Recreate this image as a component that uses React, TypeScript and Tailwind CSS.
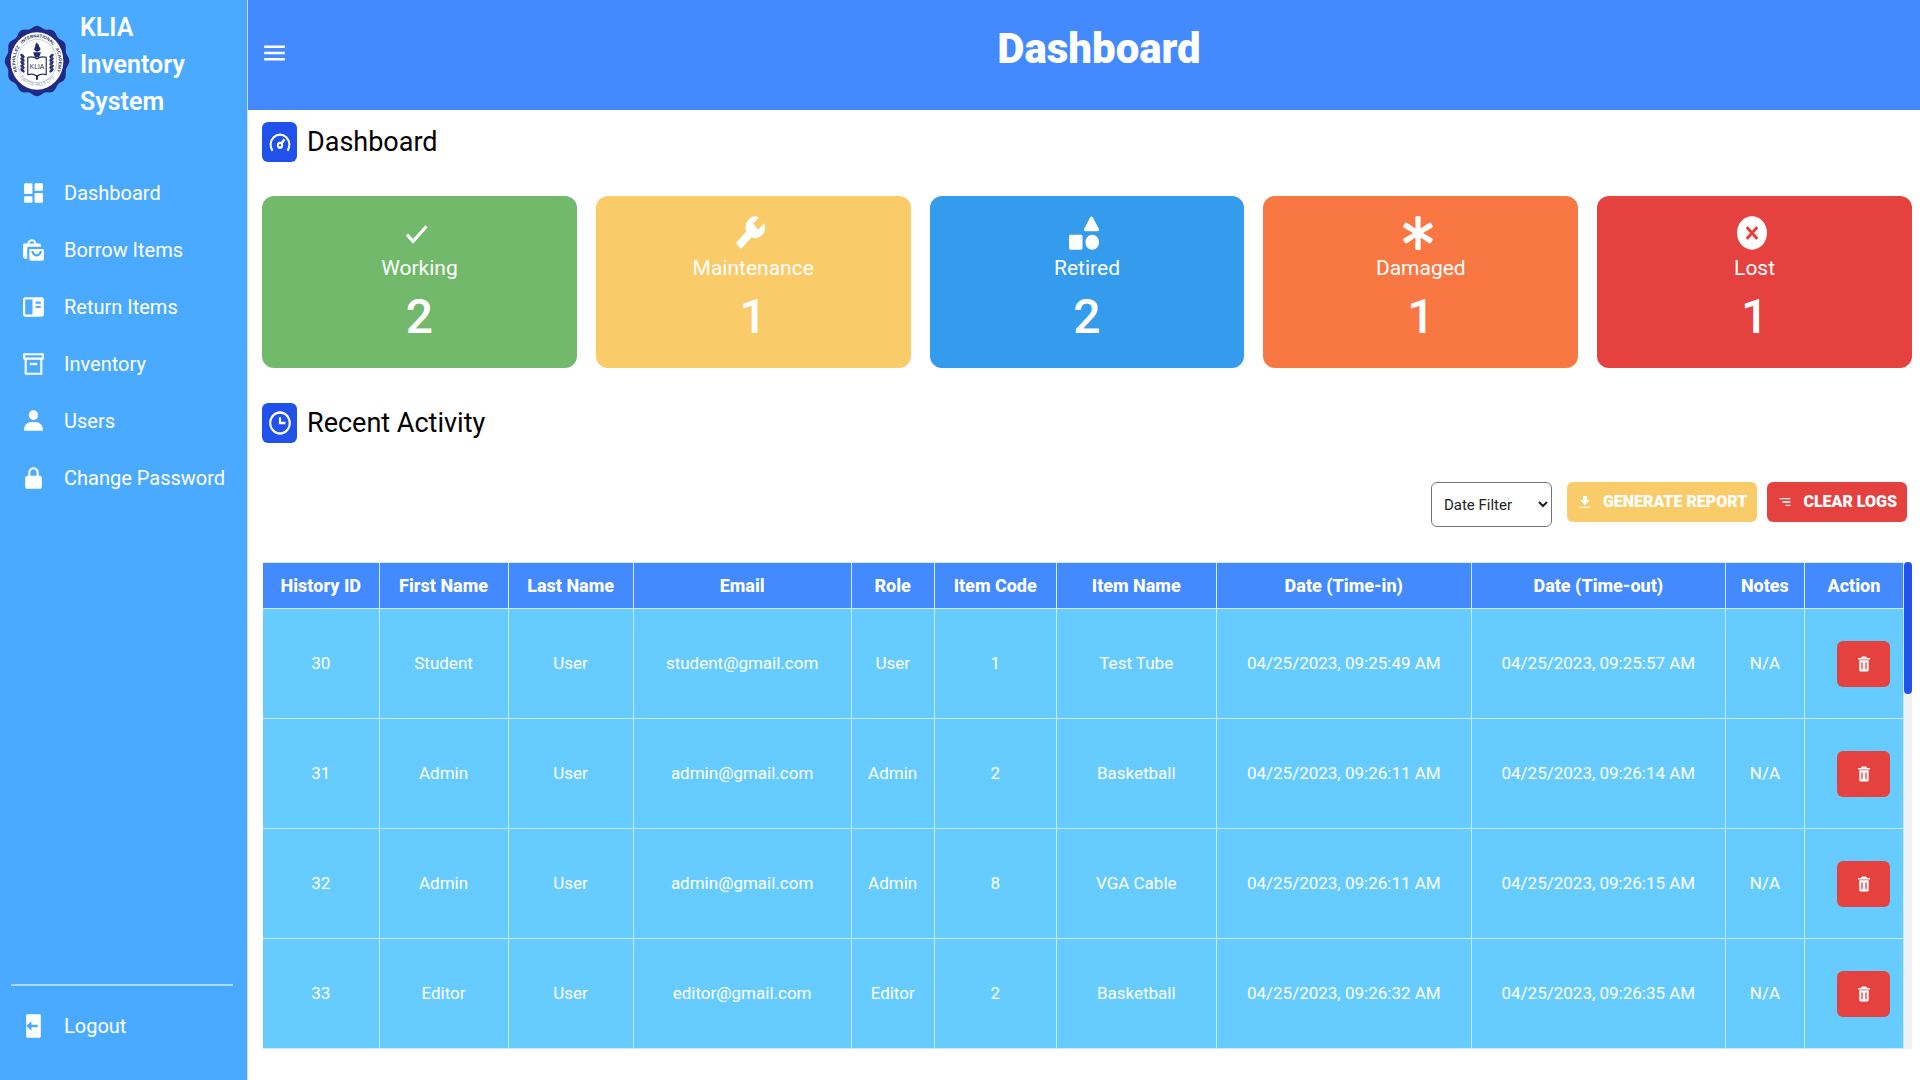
import React from 'react';
import type { IconType } from 'react-icons';
import {
  BiCheck,
  BiMenu,
  BiMenuAltRight,
  BiSolidBookContent,
  BiSolidDashboard,
  BiSolidDownload,
  BiSolidLockAlt,
  BiSolidLogOut,
  BiSolidShapes,
  BiSolidShoppingBags,
  BiSolidTrash,
  BiSolidUser,
  BiSolidWrench,
  BiSolidXCircle,
  BiTime,
} from 'react-icons/bi';
import { FaAsterisk } from 'react-icons/fa';

type IconProps = { className?: string; preserveAspectRatio?: string };

function ArchiveIcon({ className, preserveAspectRatio }: IconProps) {
  return (
    <svg viewBox="0 0 24 24" preserveAspectRatio={preserveAspectRatio} fill="none" stroke="currentColor" strokeWidth="2" strokeLinejoin="round" className={className} aria-hidden="true">
      <rect x="3" y="3" width="18" height="4" />
      <path d="M4.5 7 V21 H19.5 V7" />
      <path d="M8.5 12 H15.5" />
    </svg>
  );
}

const navItems: { label: string; icon: React.ComponentType<IconProps> }[] = [
  { label: 'Dashboard', icon: BiSolidDashboard },
  { label: 'Borrow Items', icon: BiSolidShoppingBags },
  { label: 'Return Items', icon: BiSolidBookContent },
  { label: 'Inventory', icon: ArchiveIcon },
  { label: 'Users', icon: BiSolidUser },
  { label: 'Change Password', icon: BiSolidLockAlt },
];

const stats: { label: string; value: number; icon: IconType; color: string; size: string }[] = [
  { label: 'Working', value: 2, icon: BiCheck, color: 'bg-[#72b96b]', size: 'h-10 w-9' },
  { label: 'Maintenance', value: 1, icon: BiSolidWrench, color: 'bg-[#facb69]', size: 'h-10 w-9' },
  { label: 'Retired', value: 2, icon: BiSolidShapes, color: 'bg-[#359bed]', size: 'h-10 w-9' },
  { label: 'Damaged', value: 1, icon: FaAsterisk, color: 'bg-[#f97742]', size: 'h-10 w-9 py-[3px] px-0.5' },
  { label: 'Lost', value: 1, icon: BiSolidXCircle, color: 'bg-[#e5423f]', size: 'h-10 w-9' },
];

const columns: { label: string; width: string }[] = [
  { label: 'History ID', width: 'w-[116px]' },
  { label: 'First Name', width: 'w-[129px]' },
  { label: 'Last Name', width: 'w-[125px]' },
  { label: 'Email', width: 'w-[218px]' },
  { label: 'Role', width: 'w-[83px]' },
  { label: 'Item Code', width: 'w-[122px]' },
  { label: 'Item Name', width: 'w-[160px]' },
  { label: 'Date (Time-in)', width: 'w-[255px]' },
  { label: 'Date (Time-out)', width: 'w-[254px]' },
  { label: 'Notes', width: 'w-[79px]' },
  { label: 'Action', width: 'w-[99px]' },
];

const rows: string[][] = [
  ['30', 'Student', 'User', 'student@gmail.com', 'User', '1', 'Test Tube', '04/25/2023, 09:25:49 AM', '04/25/2023, 09:25:57 AM', 'N/A'],
  ['31', 'Admin', 'User', 'admin@gmail.com', 'Admin', '2', 'Basketball', '04/25/2023, 09:26:11 AM', '04/25/2023, 09:26:14 AM', 'N/A'],
  ['32', 'Admin', 'User', 'admin@gmail.com', 'Admin', '8', 'VGA Cable', '04/25/2023, 09:26:11 AM', '04/25/2023, 09:26:15 AM', 'N/A'],
  ['33', 'Editor', 'User', 'editor@gmail.com', 'Editor', '2', 'Basketball', '04/25/2023, 09:26:32 AM', '04/25/2023, 09:26:35 AM', 'N/A'],
];

// Outline of the seal: twelve shallow lobes around the white disc.
const sealOutline = Array.from({ length: 96 }, (_, i) => {
  const a = (i / 96) * Math.PI * 2 - Math.PI / 2;
  const r = 47.2 + 1.8 * Math.cos(a * 12);
  return `${(50 + r * Math.cos(a)).toFixed(2)},${(50 + r * Math.sin(a)).toFixed(2)}`;
}).join(' ');

const ringWords: { word: string; offset: string; anchor: 'start' | 'middle' | 'end' }[] = [
  { word: 'KEPHILLEZ', offset: '2%', anchor: 'start' },
  { word: 'INTERNATIONAL', offset: '51%', anchor: 'middle' },
  { word: 'ACADEMY', offset: '98%', anchor: 'end' },
];

function Seal() {
  const leaves = [0, 1, 2, 3, 4];
  return (
    <svg viewBox="0 0 100 100" preserveAspectRatio="none" className="h-[72px] w-[66px] shrink-0" role="img" aria-label="KLIA seal">
      <defs>
        <path id="seal-top" d="M21.5 67 A33 33 0 1 1 78.5 67" />
        <path id="seal-bottom" d="M24 73 A35 35 0 0 0 76 73" />
      </defs>
      <polygon points={sealOutline} fill="#1f2a86" />
      <circle cx="50" cy="50" r="40" fill="#fff" />
      <circle cx="50" cy="50" r="30" fill="none" stroke="#9aa0c8" strokeWidth="0.8" />
      {ringWords.map(({ word, offset, anchor }) => (
        <text key={word} fill="#2a3160" fontSize="6.5" fontWeight="700" fontFamily="Liberation Sans, sans-serif">
          <textPath href="#seal-top" startOffset={offset} textAnchor={anchor}>
            {word}
          </textPath>
        </text>
      ))}
      <text fill="#8c90a8" fontSize="6" fontFamily="Liberation Sans, sans-serif">
        <textPath href="#seal-bottom" startOffset="50%" textAnchor="middle">
          CAPITOL HILLS CITY
        </textPath>
      </text>
      <path d="M50 24 c-4 3 -1 5 -4 8 c-1 3 1 5 4 5 s6 -2 5 -5 c-1 -2 -3 -2 -2 -5 c-2 0 -3 -1 -3 -3z M44 38 h12 l-3 7 h-6z M48.5 70 h3 v6 h-3z" fill="#1f2a70" />
      <path d="M36 45 q8 -2 14 2 q6 -4 14 -2 v24 q-8 -2 -14 2 q-6 -4 -14 -2z" fill="#fff" stroke="#2a3160" strokeWidth="1.8" />
      <text x="50" y="60.5" textAnchor="middle" fontSize="10" fill="#2a3160" fontFamily="Liberation Sans, sans-serif">
        KLIA
      </text>
      {leaves.map((i) => (
        <g key={i} fill="#2a3170">
          <ellipse cx="28" cy={43 + i * 5} rx="4" ry="2.2" transform={`rotate(40 28 ${43 + i * 5})`} />
          <ellipse cx="72" cy={43 + i * 5} rx="4" ry="2.2" transform={`rotate(-40 72 ${43 + i * 5})`} />
        </g>
      ))}
    </svg>
  );
}

function GaugeIcon({ className }: IconProps) {
  return (
    <svg viewBox="0 0 24 24" preserveAspectRatio="none" fill="none" stroke="currentColor" strokeWidth="2" className={className} aria-hidden="true">
      <path d="M4.5 19.5 A 9.4 8.6 0 1 1 19.5 19.5" />
      <circle cx="12" cy="14.8" r="2.1" />
      <path d="M13.5 13.2 L16.5 9.8" strokeWidth="2.4" />
    </svg>
  );
}

function SectionTitle({ icon, children }: { icon: React.ReactNode; children: React.ReactNode }) {
  return (
    <h2 className="flex h-10 items-center gap-2.5 text-[27px] text-black">
      <span className="flex h-10 w-[35px] items-center justify-center rounded-md bg-[#2051ea] text-white">{icon}</span>
      {children}
    </h2>
  );
}

export default function App() {
  return (
    <div className="flex min-h-screen bg-white font-[Roboto,sans-serif]">
      <aside className="flex w-[248px] shrink-0 flex-col border-r border-[#c9e2fb] bg-[#4aaaff] text-white">
        <div className="flex items-start gap-2.5 pt-[9px] pl-1">
          <div className="pt-4">
            <Seal />
          </div>
          <p className="w-32 text-[25px] leading-[37px] font-semibold">KLIA Inventory System</p>
        </div>
        <nav className="mt-11 flex flex-col">
          {navItems.map(({ label, icon: Icon }) => (
            <a key={label} href="#" className="flex h-[57px] items-center gap-[18px] pl-[21px] text-xl">
              <Icon preserveAspectRatio="none" className="h-[26px] w-[25px]" />
              {label}
            </a>
          ))}
        </nav>
        <div className="mt-auto mr-3.5 ml-[11px] border-t-2 border-[#a9dbfd] pt-[11px] pb-[26px]">
          <a href="#" className="flex h-[57px] items-center gap-[18px] pl-2.5 text-xl">
            <BiSolidLogOut preserveAspectRatio="none" className="h-[28px] w-[25px]" />
            Logout
          </a>
        </div>
      </aside>

      <div className="flex min-w-0 flex-1 flex-col">
        <header className="flex h-[110px] items-start bg-[#448aff] text-white">
          <button type="button" aria-label="Toggle menu" className="mt-[38px] ml-[11px]">
            <BiMenu preserveAspectRatio="none" className="h-[30px] w-[31px]" />
          </button>
          <h1 className="mt-[25px] flex-1 pr-3 text-center text-[42px] leading-[48px] font-black">Dashboard</h1>
        </header>

        <main className="pt-3 pr-2 pl-3.5">
          <SectionTitle icon={<GaugeIcon className="h-7 w-6" />}>Dashboard</SectionTitle>

          <section className="mt-[34px] grid grid-cols-5 gap-[19px]" aria-label="Item status">
            {stats.map(({ label, value, icon: Icon, color, size }) => (
              <div key={label} className={`flex h-[172px] flex-col items-center rounded-xl pt-[17px] text-white ${color}`}>
                <Icon preserveAspectRatio="none" className={`mr-1.5 ${size}`} />
                <p className="text-[21px] leading-[30px]">{label}</p>
                <p className="text-5xl leading-[68px] font-medium">{value}</p>
              </div>
            ))}
          </section>

          <div className="mt-[35px]">
            <SectionTitle icon={<BiTime preserveAspectRatio="none" className="h-7 w-[26px]" />}>Recent Activity</SectionTitle>
          </div>

          <div className="mt-[39px] flex items-start justify-end gap-2.5 pr-[5px]">
            <select aria-label="Date Filter" className="mr-[5px] h-[45px] w-[121px] rounded-md border border-[#767676] bg-white px-2 text-[15px] text-[#222]">
              <option>Date Filter</option>
            </select>
            <button type="button" className="flex h-10 items-center gap-2.5 rounded-md bg-[#facb69] px-2.5 text-[16px] font-black text-white">
              <BiSolidDownload className="size-4" />
              GENERATE REPORT
            </button>
            <button type="button" className="flex h-10 items-center gap-2.5 rounded-md bg-[#e5423f] px-2.5 text-[16px] font-black text-white">
              <BiMenuAltRight className="size-4" />
              CLEAR LOGS
            </button>
          </div>

          <div className="mt-[35px] flex">
            <table className="ml-px min-w-0 flex-1 table-fixed border-collapse text-center text-white">
              <thead>
                <tr className="h-[46px] bg-[#448aff]">
                  {columns.map(({ label, width }) => (
                    <th key={label} scope="col" className={`border border-[#d3ecfc] text-[18px] font-extrabold first:border-l-0 ${width}`}>
                      {label}
                    </th>
                  ))}
                </tr>
              </thead>
              <tbody>
                {rows.map((row) => (
                  <tr key={row[0]} className="h-[110px] bg-[#66ccff] text-[17px]">
                    {row.map((cell, i) => (
                      <td key={i} className="border border-[#c5ebfe] first:border-l-0">
                        {cell}
                      </td>
                    ))}
                    <td className="border border-[#c5ebfe] pr-[13px]">
                      <button type="button" aria-label={`Delete entry ${row[0]}`} className="ml-auto flex h-[46px] w-[53px] items-center justify-center rounded-md bg-[#e5423f]">
                        <BiSolidTrash preserveAspectRatio="none" className="h-[18px] w-4" />
                      </button>
                    </td>
                  </tr>
                ))}
              </tbody>
            </table>
            <div className="w-2 bg-[#f1f1f1]" aria-hidden="true">
              <div className="h-[132px] rounded-full bg-[#2051ea]" />
            </div>
          </div>
        </main>
      </div>
    </div>
  );
}
